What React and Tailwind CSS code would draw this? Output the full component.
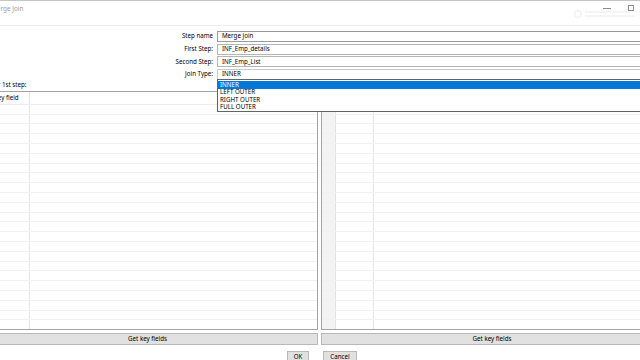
import React from "react";

function Table({ leftBand }) {
  const rows = Array.from({ length: 23 });
  return (
    <div className="flex-1 flex flex-col border border-[#a4a4a4] bg-white overflow-hidden">
      <div className="flex h-[13px] shrink-0 border-b border-[#ededed]">
        <div className={"w-[14px] shrink-0 border-r border-[#e2e2e2] " + (leftBand ? "bg-white" : "bg-[#f3f3f3]")}></div>
        <div className="w-[38px] shrink-0 border-r border-[#e6e6e6] pl-[2px] flex items-center">Key field</div>
        <div className="flex-1"></div>
      </div>
      {rows.map((_, i) => (
        <div key={i} className="flex h-[9.8px] shrink-0 border-b border-[#f1f1f1]">
          <div className={"w-[14px] shrink-0 border-r border-[#e2e2e2] " + (leftBand ? "bg-white" : "bg-[#f3f3f3]")}></div>
          <div className="w-[38px] shrink-0 border-r border-[#e6e6e6]"></div>
          <div className="flex-1"></div>
        </div>
      ))}
    </div>
  );
}

export default function App() {
  return (
    <div className="w-[640px] h-[360px] overflow-hidden bg-white relative text-[6.2px] text-black font-['Noto_Sans',sans-serif] leading-none">
      {/* title bar */}
      <div className="h-[26px] border-t border-[#c6c6c6] border-b border-b-[#ececec] flex items-start relative">
        <div className="ml-[-9px] mt-[5px] text-[#9c9c9c] text-[6.4px]">Merge Join</div>
        <div className="flex-1"></div>
        <div className="absolute left-[574px] top-[9px] flex items-center gap-[3px] opacity-40">
          <div className="w-[8px] h-[8px] rounded-full border border-[#cfcfcf]"></div>
          <div className="flex flex-col gap-[2px]">
            <div className="w-[46px] h-[2px] bg-[#e4e4e4]"></div>
            <div className="w-[50px] h-[2px] bg-[#e4e4e4]"></div>
          </div>
        </div>
        <div className="absolute left-[603px] top-[7px] w-[8px] h-[1px] bg-[#8a8a8a]"></div>
        <div className="absolute left-[628px] top-[4px] w-[6px] h-[6px] border border-[#8a8a8a]"></div>
      </div>

      {/* form */}
      <div className="pt-[5px] flex flex-col gap-y-[1.6px] mr-[-6px]">
        {[
          ["Step name", "Merge Join", "border-[#9a9a9a]"],
          ["First Step:", "INF_Emp_details", "border-[#b4b4b4]"],
          ["Second Step:", "INF_Emp_List", "border-[#b4b4b4]"],
          ["Join Type:", "INNER", "border-[#c8c8c8]"],
        ].map(([label, value, b]) => (
          <div key={label} className="flex h-[11px] items-center">
            <div className="w-[213px] shrink-0 text-right pr-[0px]">{label}</div>
            <div className={"ml-[4px] flex-1 h-[11px] border " + b + " flex items-center pl-[4px]"}>{value}</div>
          </div>
        ))}
      </div>

      {/* panels */}
      <div className="flex gap-[3px] ml-[-23px] w-[686px]">
        <div className="w-[341px] flex flex-col">
          <div className="h-[11px] flex items-center">Keys for 1st step:</div>
          <div className="h-[239px] flex flex-col">
            <Table leftBand />
          </div>
          <div className="mt-[3px] h-[12px] bg-[#e1e1e1] border border-[#b8b8b8] flex items-center justify-center">Get key fields</div>
        </div>
        <div className="w-[342px] flex flex-col">
          <div className="h-[11px] flex items-center">Keys for 2nd step:</div>
          <div className="h-[239px] flex flex-col">
            <Table />
          </div>
          <div className="mt-[3px] h-[12px] bg-[#e1e1e1] border border-[#b8b8b8] flex items-center justify-center">Get key fields</div>
        </div>
      </div>

      {/* OK / Cancel */}
      <div className="mt-[6px] flex justify-center gap-[14px] pl-[4px]">
        <div className="w-[22px] h-[12px] bg-[#e1e1e1] border border-[#b8b8b8] flex items-center justify-center">OK</div>
        <div className="w-[34px] h-[12px] bg-[#e1e1e1] border border-[#b8b8b8] flex items-center justify-center">Cancel</div>
      </div>

      {/* dropdown list */}
      <div className="absolute left-[217px] top-[79px] w-[430px] h-[33px] border border-[#646464] bg-white pt-[1px]">
        <div className="h-[7.6px] bg-[#0078d7] text-white flex items-center pl-[2px]">INNER</div>
        <div className="h-[7.6px] flex items-center pl-[2px]">LEFT OUTER</div>
        <div className="h-[7.6px] flex items-center pl-[2px]">RIGHT OUTER</div>
        <div className="h-[7.6px] flex items-center pl-[2px]">FULL OUTER</div>
      </div>
    </div>
  );
}
